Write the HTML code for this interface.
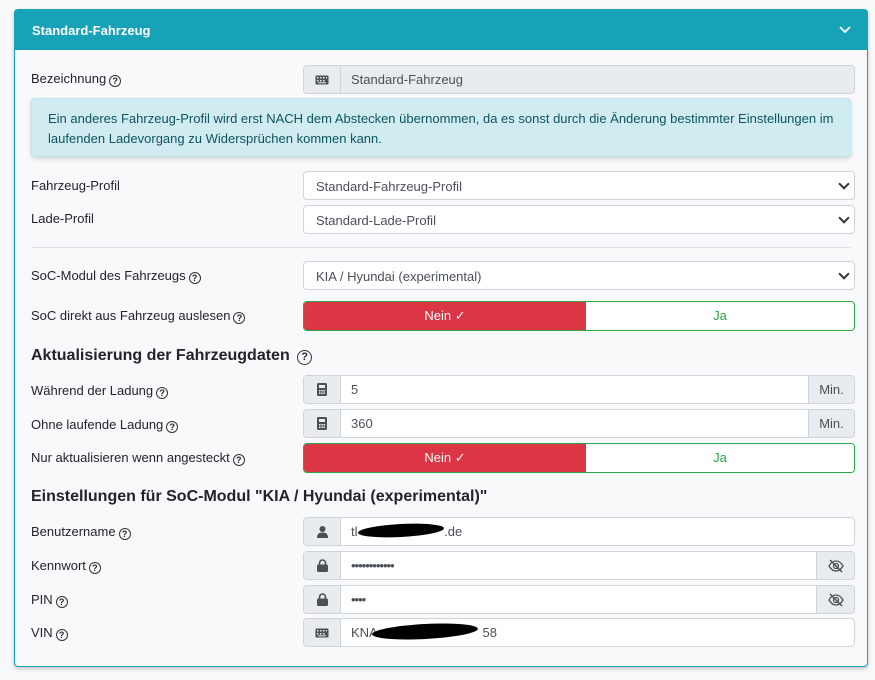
<!DOCTYPE html>
<html><head><meta charset="utf-8"><style>
*{box-sizing:border-box}
body{margin:0;background:#f8f9fa;font-family:"Liberation Sans",sans-serif;font-size:13px;color:#212529;width:875px;height:680px;position:relative;overflow:hidden}
.card{position:absolute;left:14px;top:9px;width:854px;height:658px;border:1px solid #17a2b8;border-radius:4px;background:#f8f9fa;box-shadow:0 2px 4px rgba(0,0,0,.2)}
.hdr{height:40px;background:#17a2b8;color:#fff;font-weight:bold;font-size:13px;padding:13px 17px;position:relative}
.hdr svg{position:absolute;right:16px;top:16px}
.a{position:absolute}
.lbl{position:absolute;left:31px;font-size:13px}
.q{display:inline-block;width:12px;height:12px;border:1.3px solid #333;border-radius:50%;font-size:9px;line-height:10px;text-align:center;font-weight:bold;vertical-align:-1px;margin-left:3px}
.ig{position:absolute;left:303px;width:552px;height:29px;display:flex;border:1px solid #ced4da;border-radius:4px;background:#fff;overflow:hidden}
.ad{width:37px;background:#e9ecef;border-right:1px solid #ced4da;display:flex;align-items:center;justify-content:center;flex:none}
.ad.r{border-right:0;border-left:1px solid #ced4da;width:46px;color:#495057}
.ad.e{border-right:0;border-left:1px solid #ced4da;width:38px}
.in{flex:1;padding:6px 10px;color:#495057}
.sel{position:absolute;left:303px;width:552px;height:29px;border:1px solid #ced4da;border-radius:4px;background:#fff;padding:7px 12px;color:#495057}
.sel:after{content:"";position:absolute;right:6px;top:8px;width:6px;height:6px;border-right:2px solid #333;border-bottom:2px solid #333;transform:rotate(45deg)}
.tg{position:absolute;left:303px;width:552px;height:30px;display:flex;border:1px solid #28a745;border-radius:4px;overflow:hidden}
.tg div{flex:1;text-align:center;line-height:28px}
.tg .n{background:#dc3545;color:#fff;flex:none;width:282px}
.tg .j{background:#fff;color:#28a745}
h3{position:absolute;left:31px;margin:0;font-size:16px;font-weight:bold}
.blk{position:absolute;background:#000;border-radius:50%}
</style></head><body>
<div class="card">
<div class="hdr">Standard-Fahrzeug<svg width="12" height="8" viewBox="0 0 12 8"><path d="M1 1l5 5 5-5" stroke="#fff" stroke-width="1.8" fill="none"/></svg></div>
</div>
<div class="lbl" style="top:71px">Bezeichnung<span class="q">?</span></div>
<div class="ig" style="top:65px;background:#e9ecef"><div class="ad"><svg width="14" height="10"><rect x="0.5" y="0.5" width="13" height="9" rx="1" fill="#495057"/><g fill="#e9ecef"><rect x="2" y="2" width="1.5" height="1.5"/><rect x="5" y="2" width="1.5" height="1.5"/><rect x="8" y="2" width="1.5" height="1.5"/><rect x="11" y="2" width="1" height="1.5"/><rect x="2" y="5" width="1.5" height="1.5"/><rect x="5" y="5" width="1.5" height="1.5"/><rect x="8" y="5" width="1.5" height="1.5"/><rect x="3" y="7.3" width="8" height="1"/></g></svg></div><div class="in">Standard-Fahrzeug</div></div>
<div class="a" style="left:31px;top:98px;width:820px;height:59px;background:#d1ecf1;border:1px solid #bee5eb;border-radius:4px;color:#0c5460;padding:10px 16px;line-height:20px;font-size:13px;box-shadow:0 2px 4px rgba(0,0,0,.15)">Ein anderes Fahrzeug-Profil wird erst NACH dem Abstecken übernommen, da es sonst durch die Änderung bestimmter Einstellungen im laufenden Ladevorgang zu Widersprüchen kommen kann.</div>
<div class="lbl" style="top:178px">Fahrzeug-Profil</div>
<div class="sel" style="top:171px">Standard-Fahrzeug-Profil</div>
<div class="lbl" style="top:211px">Lade-Profil</div>
<div class="sel" style="top:205px">Standard-Lade-Profil</div>
<div class="a" style="left:31px;top:247px;width:820px;border-top:1px solid #dee2e6"></div>
<div class="lbl" style="top:268px">SoC-Modul des Fahrzeugs<span class="q">?</span></div>
<div class="sel" style="top:261px">KIA / Hyundai (experimental)</div>
<div class="lbl" style="top:308px">SoC direkt aus Fahrzeug auslesen<span class="q">?</span></div>
<div class="tg" style="top:301px"><div class="n">Nein ✓</div><div class="j">Ja</div></div>
<h3 style="top:347px">Aktualisierung der Fahrzeugdaten <span class="q" style="width:15px;height:15px;font-size:11px;line-height:12px;vertical-align:0px">?</span></h3>
<div class="lbl" style="top:383px">Während der Ladung<span class="q">?</span></div>
<div class="ig" style="top:375px"><div class="ad"><svg width="10" height="13"><rect width="10" height="13" rx="1.5" fill="#495057"/><rect x="2" y="2" width="6" height="3" fill="#e9ecef"/><g fill="#e9ecef"><rect x="2" y="7" width="1.5" height="1.5"/><rect x="4.3" y="7" width="1.5" height="1.5"/><rect x="6.5" y="7" width="1.5" height="1.5"/><rect x="2" y="9.5" width="1.5" height="1.5"/><rect x="4.3" y="9.5" width="1.5" height="1.5"/><rect x="6.5" y="9.5" width="1.5" height="1.5"/></g></svg></div><div class="in">5</div><div class="ad r">Min.</div></div>
<div class="lbl" style="top:417px">Ohne laufende Ladung<span class="q">?</span></div>
<div class="ig" style="top:409px"><div class="ad"><svg width="10" height="13"><rect width="10" height="13" rx="1.5" fill="#495057"/><rect x="2" y="2" width="6" height="3" fill="#e9ecef"/><g fill="#e9ecef"><rect x="2" y="7" width="1.5" height="1.5"/><rect x="4.3" y="7" width="1.5" height="1.5"/><rect x="6.5" y="7" width="1.5" height="1.5"/><rect x="2" y="9.5" width="1.5" height="1.5"/><rect x="4.3" y="9.5" width="1.5" height="1.5"/><rect x="6.5" y="9.5" width="1.5" height="1.5"/></g></svg></div><div class="in">360</div><div class="ad r">Min.</div></div>
<div class="lbl" style="top:450px">Nur aktualisieren wenn angesteckt<span class="q">?</span></div>
<div class="tg" style="top:443px"><div class="n">Nein ✓</div><div class="j">Ja</div></div>
<h3 style="top:488px">Einstellungen für SoC-Modul "KIA / Hyundai (experimental)"</h3>
<div class="lbl" style="top:524px">Benutzername<span class="q">?</span></div>
<div class="ig" style="top:517px"><div class="ad"><svg width="11" height="12"><circle cx="5.5" cy="3" r="3" fill="#495057"/><path d="M0 12c0-4 2-5.5 5.5-5.5S11 8 11 12z" fill="#495057"/></svg></div><div class="in">tl&nbsp;&nbsp;&nbsp;&nbsp;&nbsp;&nbsp;&nbsp;&nbsp;&nbsp;&nbsp;&nbsp;&nbsp;&nbsp;&nbsp;&nbsp;&nbsp;&nbsp;&nbsp;&nbsp;&nbsp;&nbsp;&nbsp;&nbsp;&nbsp;.de</div></div>
<div class="blk" style="left:358px;top:524px;width:86px;height:13px;transform:rotate(-3deg)"></div>
<div class="lbl" style="top:558px">Kennwort<span class="q">?</span></div>
<div class="ig" style="top:551px"><div class="ad"><svg width="11" height="13"><path d="M2.5 6V4a3 3 0 0 1 6 0v2" stroke="#495057" stroke-width="1.6" fill="none"/><rect y="5.5" width="11" height="7.5" rx="1.5" fill="#495057"/></svg></div><div class="in" style="letter-spacing:-1px">••••••••••••</div><div class="ad e"><svg width="16" height="14" viewBox="0 0 16 14"><path d="M1 7c2-3.5 4.5-5 7-5s5 1.5 7 5c-2 3.5-4.5 5-7 5s-5-1.5-7-5z" stroke="#495057" stroke-width="1.3" fill="none"/><circle cx="8" cy="7" r="2.5" stroke="#495057" stroke-width="1.3" fill="none"/><path d="M2 1l12 12" stroke="#495057" stroke-width="1.5"/></svg></div></div>
<div class="lbl" style="top:592px">PIN<span class="q">?</span></div>
<div class="ig" style="top:585px"><div class="ad"><svg width="11" height="13"><path d="M2.5 6V4a3 3 0 0 1 6 0v2" stroke="#495057" stroke-width="1.6" fill="none"/><rect y="5.5" width="11" height="7.5" rx="1.5" fill="#495057"/></svg></div><div class="in" style="letter-spacing:-1px">••••</div><div class="ad e"><svg width="16" height="14" viewBox="0 0 16 14"><path d="M1 7c2-3.5 4.5-5 7-5s5 1.5 7 5c-2 3.5-4.5 5-7 5s-5-1.5-7-5z" stroke="#495057" stroke-width="1.3" fill="none"/><circle cx="8" cy="7" r="2.5" stroke="#495057" stroke-width="1.3" fill="none"/><path d="M2 1l12 12" stroke="#495057" stroke-width="1.5"/></svg></div></div>
<div class="lbl" style="top:625px">VIN<span class="q">?</span></div>
<div class="ig" style="top:618px"><div class="ad"><svg width="14" height="10"><rect x="0.5" y="0.5" width="13" height="9" rx="1" fill="#495057"/><g fill="#e9ecef"><rect x="2" y="2" width="1.5" height="1.5"/><rect x="5" y="2" width="1.5" height="1.5"/><rect x="8" y="2" width="1.5" height="1.5"/><rect x="11" y="2" width="1" height="1.5"/><rect x="2" y="5" width="1.5" height="1.5"/><rect x="5" y="5" width="1.5" height="1.5"/><rect x="8" y="5" width="1.5" height="1.5"/><rect x="3" y="7.3" width="8" height="1"/></g></svg></div><div class="in">KNA&nbsp;&nbsp;&nbsp;&nbsp;&nbsp;&nbsp;&nbsp;&nbsp;&nbsp;&nbsp;&nbsp;&nbsp;&nbsp;&nbsp;&nbsp;&nbsp;&nbsp;&nbsp;&nbsp;&nbsp;&nbsp;&nbsp;&nbsp;&nbsp;&nbsp;&nbsp;&nbsp;&nbsp;&nbsp;58</div></div>
<div class="blk" style="left:372px;top:624px;width:106px;height:15px;transform:rotate(-3deg)"></div>
</body></html>
